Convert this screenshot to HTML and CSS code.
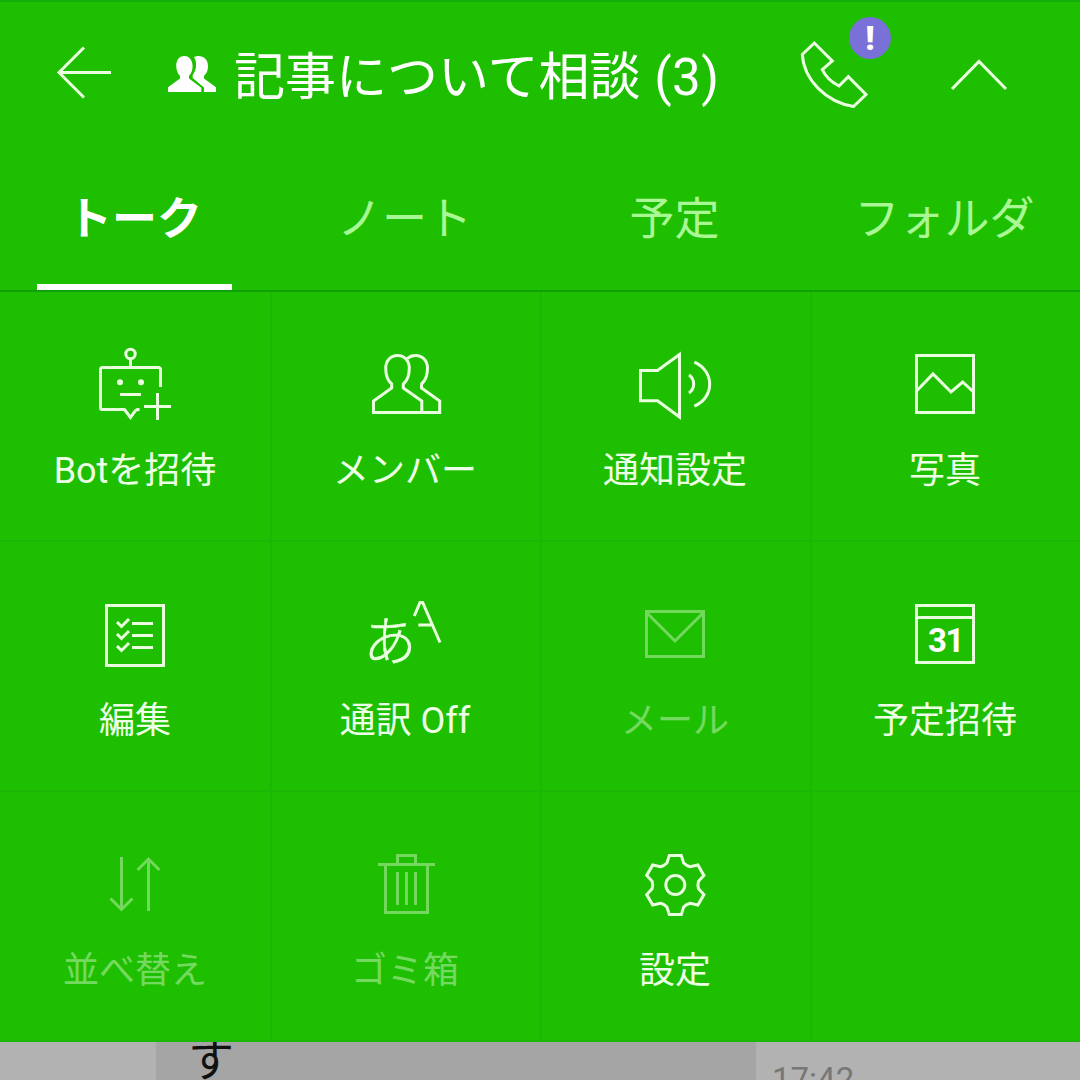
FILE: index.html
```html
<!DOCTYPE html>
<html lang="ja">
<head>
<meta charset="utf-8">
<title>記事について相談</title>
<link rel="stylesheet" href="styles.css">
</head>
<body>
<div class="app">
  <header class="header">
    <svg class="icon back" width="62" height="60" viewBox="0 0 62 60"><path d="M61 30.500H9M34 5.500 9 30.500l25 25"/></svg>
    <svg class="people" width="48" height="36" viewBox="0 0 48 36"><path d="M0 36v-4.700L12 22.500V20C6 14 7 0 16.300 0S27 14 21 20v2.500l12.300 9.300V36zM36 36v-4.500L24.700 22v-3C29 13 29 6 26 1c7-3 14 1 14 9 0 5-1.500 7.500-4 10v2.500l12 8.800V36z"/></svg>
    <h1 class="title">記事について相談 <span class="count">(3)</span></h1>
    <div class="call">
      <svg class="icon" width="72" height="72" viewBox="0 0 72 72"><path d="M16.300 7 4.300 18.500C6 44 28 66 55.500 70.500L68 58.500 50.300 40.700 41 50C34 46.500 27.500 40.500 24.300 33.700L34.300 25z"/></svg>
      <span class="badge">!</span>
    </div>
    <svg class="icon chevron" width="60" height="36" viewBox="0 0 60 36"><path d="M3 32 30 4.500 57 32"/></svg>
  </header>
  <nav class="tabs">
    <a class="tab active">トーク</a>
    <a class="tab">ノート</a>
    <a class="tab">予定</a>
    <a class="tab">フォルダ</a>
  </nav>
  <main class="menu">
    <div class="item">
      <svg class="icon" width="96" height="84" viewBox="0 0 96 84"><circle cx="43.500" cy="12" r="4.700"/><path d="M43.500 17v8M73.500 45V27.500q0-2-2-2h-56q-2 0-2 2v38q0 2 2 2H37.500l6 8 5-7q1-1 4-1M33 52.500h21M57 64.500h27M70.500 51v27"/><g class="solid"><circle cx="33" cy="40.300" r="3"/><circle cx="54" cy="40.300" r="3"/></g></svg>
      <span class="label">Botを招待</span>
    </div>
    <div class="item">
      <svg class="icon" width="96" height="84" viewBox="0 0 96 84"><path d="M16.500 70.500V59L34.700 46v-4C31 39 28.700 34 28.700 26c0-7.500 5-12.500 11.800-12.500S52.300 18.500 52.300 26c0 8-2.300 13-6 16v4l18.500 13v11.500zM50.500 16.500c2-2 5-3 8-3 7 0 12 5 12 12.500 0 8-2.500 13-6 16v4l18.200 13v11.500H64.800"/></svg>
      <span class="label">メンバー</span>
    </div>
    <div class="item">
      <svg class="icon" width="96" height="84" viewBox="0 0 96 84"><path d="M13.500 28.500h17l22-16v62.500l-22-16.300h-17zM62 33a11 11 0 0 1 0 18M67.300 20.200c20.500 8.500 20.500 35.500 0 44"/></svg>
      <span class="label">通知設定</span>
    </div>
    <div class="item">
      <svg class="icon" width="96" height="84" viewBox="0 0 96 84"><path d="M19.500 13.500h57v57h-57zM20 48.500l16-16.500 18 18 11.700-10L76.500 50"/></svg>
      <span class="label">写真</span>
    </div>
    <div class="item">
      <svg class="icon" width="96" height="84" viewBox="0 0 96 84"><path d="M19.500 13.500h57v60h-57zM45 31.500h21M45 43.500h21M45 55.500h21M30 30l4.500 4.500L42 27M30 42l4.500 4.500L42 39M30 54l4.500 4.500L42 51"/></svg>
      <span class="label">編集</span>
    </div>
    <div class="item">
      <svg class="icon" width="96" height="84" viewBox="0 0 96 84"><text class="kana" x="6.500" y="69">あ</text><path d="M57.300 24 63 10.500h2.700L83 50.500M61.300 33h13"/></svg>
      <span class="label">通訳 Off</span>
    </div>
    <div class="item disabled">
      <svg class="icon" width="96" height="84" viewBox="0 0 96 84"><path d="M19.500 19.500h57v45h-57zM20 21l28 28 28-28"/></svg>
      <span class="label">メール</span>
    </div>
    <div class="item">
      <svg class="icon" width="96" height="84" viewBox="0 0 96 84"><path d="M19.500 13.500h57v57h-57zM19.500 25.500h57"/><text class="date" x="48.500" y="60">31</text></svg>
      <span class="label">予定招待</span>
    </div>
    <div class="item disabled">
      <svg class="icon" width="96" height="84" viewBox="0 0 96 84"><path d="M34.500 15v52M23.500 56.500l11 11 11-11M61.500 69V17M50.500 28l11-11 11 11"/></svg>
      <span class="label">並べ替え</span>
    </div>
    <div class="item disabled">
      <svg class="icon" width="96" height="84" viewBox="0 0 96 84"><path d="M21 22.500h57M40.500 22.500v-9h18v9M28.500 22.500v48h42v-48M40.500 30v33M49.500 30v33M58.500 30v33"/></svg>
      <span class="label">ゴミ箱</span>
    </div>
    <div class="item">
      <svg class="icon" width="96" height="84" viewBox="0 0 96 84"><g transform="translate(48.300 43)"><path d="M-6-29.600H6L8.400-21.900Q11-19.100 14.800-18.300L22.600-20 28.600-9.600 23.200-3.700Q22 0 23.200 3.700L28.600 9.600 22.600 20 14.800 18.300Q11 19.100 8.400 21.900L6 29.600H-6L-8.400 21.900Q-11 19.100-14.800 18.300L-22.600 20-28.600 9.600-23.200 3.700Q-22 0-23.200-3.700L-28.600-9.600-22.600-20-14.800-18.300Q-11-19.100-8.400-21.900z"/><circle r="9.500"/></g></svg>
      <span class="label">設定</span>
    </div>
    <div class="item"></div>
  </main>
  <section class="chat">
    <div class="bubble">す</div>
    <time class="time">17:42</time>
  </section>
</div>
</body>
</html>
```
FILE: styles.css
```css
* { box-sizing: border-box; }
body {
  margin: 0;
  font-family: Roboto, "Noto Sans CJK JP", sans-serif;
  color: #fff;
}
.app {
  width: 1080px;
  height: 1080px;
  overflow: hidden;
  display: flex;
  flex-direction: column;
  background: #1ebf00;
}
.icon {
  display: block;
  flex: none;
  fill: none;
  stroke: #e9ffe0;
  stroke-width: 3;
}
.solid { fill: #e9ffe0; stroke: none; }
.header {
  height: 150px;
  display: flex;
  align-items: flex-start;
  padding-left: 50px;
  border-top: 2px solid #14ae0a;
}
.back { margin-top: 40px; }
.people { flex: none; margin: 54px 0 0 56px; fill: #fff; }
.title {
  margin: 38px 0 0 18px;
  width: 564px;
  font-size: 51px;
  line-height: 76px;
  font-weight: 400;
  white-space: nowrap;
}
.count { margin-left: 1px; letter-spacing: .5px; }
.call { position: relative; margin-top: 34px; flex: none; }
.badge {
  position: absolute;
  left: 51px;
  top: -19px;
  width: 42px;
  height: 42px;
  border-radius: 50%;
  background: #7970d8;
  font-size: 34px;
  line-height: 42px;
  font-weight: 900;
  text-align: center;
}
.chevron { margin: 55px 0 0 79px; }
.tabs {
  height: 142px;
  display: grid;
  grid-template-columns: repeat(4, 270px);
  border-bottom: 2px solid #0fa00c;
}
.tab {
  margin: 0 38px 0 37px;
  display: flex;
  justify-content: center;
  padding-top: 37px;
  font-size: 45px;
  line-height: 66px;
  white-space: nowrap;
  color: #a9f895;
}
.tab.active {
  color: #fff;
  font-weight: 700;
  border-bottom: 6px solid #fff;
}
.menu {
  height: 750px;
  display: grid;
  grid-template: repeat(3, 250px) / repeat(4, 270px);
}
.item {
  display: flex;
  flex-direction: column;
  align-items: center;
  padding-top: 50px;
  box-shadow: inset 0 -2px #1cb605;
}
.item:not(:nth-child(4n + 1)) {
  box-shadow: inset 0 -2px #1cb605, inset 2px 0 #1cb605;
}
.label {
  margin-top: 18px;
  font-size: 36px;
  line-height: 54px;
  white-space: nowrap;
  color: #edffe6;
}
.disabled .icon, .disabled .label { opacity: .41; }
.kana {
  font-size: 53px;
  font-weight: 300;
  fill: #e9ffe0;
  stroke: #e9ffe0;
  stroke-width: .5;
}
.date {
  font-size: 33px;
  font-weight: 700;
  letter-spacing: -1.500px;
  text-anchor: middle;
  fill: #fff;
  stroke: none;
}
.chat {
  height: 38px;
  overflow: hidden;
  display: flex;
  background: #b2b2b2;
  padding-left: 156px;
}
.bubble {
  width: 600px;
  padding-left: 32px;
  background: #a5a5a5;
  color: #111;
  font-size: 46px;
  line-height: 37px;
}
.time {
  margin: 19px 0 0 16px;
  font-size: 33px;
  line-height: 38px;
  color: #777;
}
```
